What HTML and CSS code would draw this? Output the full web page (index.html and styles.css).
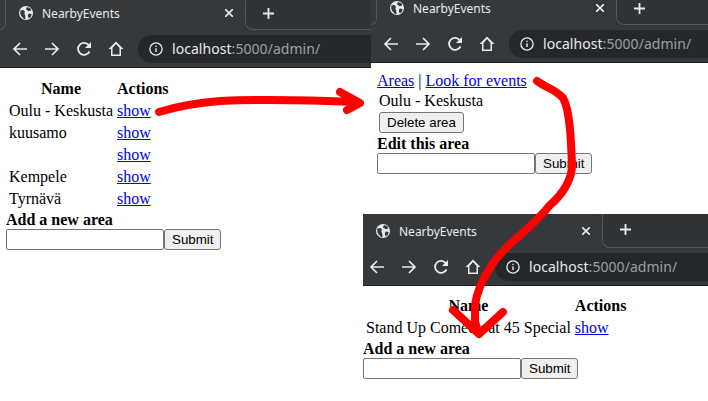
FILE: index.html
```html
<!DOCTYPE html>
<html lang="en">
<head>
  <meta charset="UTF-8" />
  <title>NearbyEvents</title>
  <link rel="stylesheet" href="styles.css">
</head>
<body>

  <!-- first shot: area list -->
  <div class="shot shot-list">
    <div class="tabstrip">
      <div class="strip-left"></div>
      <div class="tab">
        <svg class="globe" viewBox="0 0 16 16"><circle cx="8" cy="8" r="8" fill="#e8eaed"/><path d="M1.500 5L5 4.500 7 6.500 6 8 7 10.500 7.500 14.500 6 15 3 12 1.500 9zM9 1l4 1.500 1 2.500-3 1-1-1-2-1zM11 8.500l3.500.5-1 3.500-2.500 1.500-1-3z" fill="#35393c"/></svg>
        <span class="tab-title">NearbyEvents</span>
        <svg class="tab-close" viewBox="0 0 8 8"><path d="M0 0L8 8M8 0L0 8" stroke="#e8eaed" stroke-width="1.600"/></svg>
      </div>
      <div class="strip-rest">
        <svg class="newtab" viewBox="0 0 12 12"><path d="M6 0v12M0 6h12" stroke="#e8eaed" stroke-width="2"/></svg>
      </div>
    </div>
    <div class="toolbar">
      <svg class="nav" viewBox="0 0 16 16"><path d="M15 8H2M8 2L2 8l6 6" fill="none" stroke="#e8eaed" stroke-width="1.700"/></svg>
      <svg class="nav" viewBox="0 0 16 16"><path d="M1 8h13M8 2l6 6-6 6" fill="none" stroke="#e8eaed" stroke-width="1.700"/></svg>
      <svg class="nav" viewBox="0 0 16 16"><path d="M13.500 10.500A6 6 0 1 1 13 4.500" fill="none" stroke="#e8eaed" stroke-width="1.800"/><path d="M15 1v6H9z" fill="#e8eaed"/></svg>
      <svg class="nav" viewBox="0 0 16 16"><path d="M8 .5L.5 8H3v7h10V8h2.500zM4.500 13.500V7L8 3l3.500 4v6.500z" fill="#e8eaed" fill-rule="evenodd"/></svg>
      <div class="omnibox">
        <svg class="info" viewBox="0 0 16 16"><circle cx="8" cy="8" r="7" fill="none" stroke="#e8eaed" stroke-width="1.500"/><path d="M7.200 7h1.600v4.500H7.200zM7.200 4.200h1.600v1.600H7.200z" fill="#e8eaed"/></svg>
        <span class="host">localhost</span><span class="path">:5000/admin/</span>
      </div>
    </div>
    <div class="page">
      <table>
        <tr><th>Name</th><th>Actions</th></tr>
        <tr><td>Oulu - Keskusta</td><td><a href="#">show</a></td></tr>
        <tr><td>kuusamo</td><td><a href="#">show</a></td></tr>
        <tr><td></td><td><a href="#">show</a></td></tr>
        <tr><td>Kempele</td><td><a href="#">show</a></td></tr>
        <tr><td>Tyrnävä</td><td><a href="#">show</a></td></tr>
      </table>
      <div class="label">Add a new area</div>
      <form class="area-form"><input type="text"><button type="button">Submit</button></form>
    </div>
  </div>

  <!-- second shot: one area -->
  <div class="shot shot-area">
    <div class="tabstrip">
      <div class="strip-left"></div>
      <div class="tab">
        <svg class="globe" viewBox="0 0 16 16"><circle cx="8" cy="8" r="8" fill="#e8eaed"/><path d="M1.500 5L5 4.500 7 6.500 6 8 7 10.500 7.500 14.500 6 15 3 12 1.500 9zM9 1l4 1.500 1 2.500-3 1-1-1-2-1zM11 8.500l3.500.5-1 3.500-2.500 1.500-1-3z" fill="#35393c"/></svg>
        <span class="tab-title">NearbyEvents</span>
        <svg class="tab-close" viewBox="0 0 8 8"><path d="M0 0L8 8M8 0L0 8" stroke="#e8eaed" stroke-width="1.600"/></svg>
      </div>
      <div class="strip-rest">
        <svg class="newtab" viewBox="0 0 12 12"><path d="M6 0v12M0 6h12" stroke="#e8eaed" stroke-width="2"/></svg>
      </div>
    </div>
    <div class="toolbar">
      <svg class="nav" viewBox="0 0 16 16"><path d="M15 8H2M8 2L2 8l6 6" fill="none" stroke="#e8eaed" stroke-width="1.700"/></svg>
      <svg class="nav" viewBox="0 0 16 16"><path d="M1 8h13M8 2l6 6-6 6" fill="none" stroke="#e8eaed" stroke-width="1.700"/></svg>
      <svg class="nav" viewBox="0 0 16 16"><path d="M13.500 10.500A6 6 0 1 1 13 4.500" fill="none" stroke="#e8eaed" stroke-width="1.800"/><path d="M15 1v6H9z" fill="#e8eaed"/></svg>
      <svg class="nav" viewBox="0 0 16 16"><path d="M8 .5L.5 8H3v7h10V8h2.500zM4.500 13.500V7L8 3l3.500 4v6.500z" fill="#e8eaed" fill-rule="evenodd"/></svg>
      <div class="omnibox">
        <svg class="info" viewBox="0 0 16 16"><circle cx="8" cy="8" r="7" fill="none" stroke="#e8eaed" stroke-width="1.500"/><path d="M7.200 7h1.600v4.500H7.200zM7.200 4.200h1.600v1.600H7.200z" fill="#e8eaed"/></svg>
        <span class="host">localhost</span><span class="path">:5000/admin/</span>
      </div>
    </div>
    <div class="page">
      <div class="links"><a href="#">Areas</a> | <a href="#">Look for events</a></div>
      <div class="area-name">Oulu - Keskusta</div>
      <button type="button" class="delete">Delete area</button>
      <div class="label">Edit this area</div>
      <form class="area-form"><input type="text"><button type="button">Submit</button></form>
    </div>
  </div>

  <!-- third shot: events list -->
  <div class="shot shot-events">
    <div class="tabstrip">
      <div class="tab">
        <svg class="globe" viewBox="0 0 16 16"><circle cx="8" cy="8" r="8" fill="#e8eaed"/><path d="M1.500 5L5 4.500 7 6.500 6 8 7 10.500 7.500 14.500 6 15 3 12 1.500 9zM9 1l4 1.500 1 2.500-3 1-1-1-2-1zM11 8.500l3.500.5-1 3.500-2.500 1.500-1-3z" fill="#35393c"/></svg>
        <span class="tab-title">NearbyEvents</span>
        <svg class="tab-close" viewBox="0 0 8 8"><path d="M0 0L8 8M8 0L0 8" stroke="#e8eaed" stroke-width="1.600"/></svg>
      </div>
      <div class="strip-rest">
        <svg class="newtab" viewBox="0 0 12 12"><path d="M6 0v12M0 6h12" stroke="#e8eaed" stroke-width="2"/></svg>
      </div>
    </div>
    <div class="toolbar">
      <svg class="nav" viewBox="0 0 16 16"><path d="M15 8H2M8 2L2 8l6 6" fill="none" stroke="#e8eaed" stroke-width="1.700"/></svg>
      <svg class="nav" viewBox="0 0 16 16"><path d="M1 8h13M8 2l6 6-6 6" fill="none" stroke="#e8eaed" stroke-width="1.700"/></svg>
      <svg class="nav" viewBox="0 0 16 16"><path d="M13.500 10.500A6 6 0 1 1 13 4.500" fill="none" stroke="#e8eaed" stroke-width="1.800"/><path d="M15 1v6H9z" fill="#e8eaed"/></svg>
      <svg class="nav" viewBox="0 0 16 16"><path d="M8 .5L.5 8H3v7h10V8h2.500zM4.500 13.500V7L8 3l3.500 4v6.500z" fill="#e8eaed" fill-rule="evenodd"/></svg>
      <div class="omnibox">
        <svg class="info" viewBox="0 0 16 16"><circle cx="8" cy="8" r="7" fill="none" stroke="#e8eaed" stroke-width="1.500"/><path d="M7.200 7h1.600v4.500H7.200zM7.200 4.200h1.600v1.600H7.200z" fill="#e8eaed"/></svg>
        <span class="host">localhost</span><span class="path">:5000/admin/</span>
      </div>
    </div>
    <div class="page">
      <table>
        <tr><th>Name</th><th>Actions</th></tr>
        <tr><td>Stand Up Comedy at 45 Special</td><td><a href="#">show</a></td></tr>
      </table>
      <div class="label">Add a new area</div>
      <form class="area-form"><input type="text"><button type="button">Submit</button></form>
    </div>
  </div>

  <!-- hand drawn arrows on top -->
  <svg class="scribble" viewBox="0 0 708 401">
    <path d="M159 112C175 107 195 103 220 101C260 99 310 100 358 102M340 92L360 103L347 110" />
    <path d="M537 81C547 88 556 90 563 98C570 110 571 140 572 165C572 180 562 195 550 205C540 218 528 228 517 238C505 248 496 258 490 268C482 280 477 292 475 305L475 322L479 334M453 310L479 334L503 312" />
  </svg>

</body>
</html>
```

FILE: styles.css
```css
body {
  margin: 0;
  width: 708px;
  height: 401px;
  position: relative;
  overflow: hidden;
  background: #fff;
}
.shot {
  position: absolute;
  overflow: hidden;
  background: #fff;
}
.shot-list {
  left: 0;
  top: 0;
  width: 371px;
  height: 260px;
}
.shot-area {
  left: 371px;
  top: -5px;
  width: 337px;
  height: 185px;
}
.shot-events {
  left: 363px;
  top: 214px;
  width: 345px;
  height: 170px;
}
.tabstrip {
  height: 30px;
  background: #303437;
  display: flex;
  align-items: flex-end;
}
.shot-events .tabstrip {
  height: 34px;
}
.strip-left {
  width: 6px;
  height: 100%;
  box-sizing: border-box;
  border-right: 1px solid #55595d;
  border-bottom: 1px solid #55595d;
  border-radius: 0 0 8px 0;
  background: #35393c;
  flex: none;
}
.tab {
  height: 34px;
  width: 239px;
  flex: none;
  padding: 0 13px;
  box-sizing: border-box;
  background: #35393c;
  border-radius: 8px 8px 0 0;
  display: flex;
  align-items: center;
  color: #e8eaed;
  font-family: "Noto Sans", sans-serif;
  font-size: 12px;
}
.globe {
  width: 14px;
  height: 14px;
  margin-right: 9px;
}
.tab-title {
  flex: 1;
}
.tab-close {
  width: 8px;
  height: 8px;
  margin-right: -1px;
}
.strip-rest {
  flex: 1;
  height: 100%;
  box-sizing: border-box;
  padding: 0 0 0 17px;
  border-left: 1px solid #55595d;
  border-bottom: 1px solid #55595d;
  border-radius: 0 0 0 8px;
  display: flex;
  align-items: center;
}
.newtab {
  width: 11px;
  height: 11px;
  margin-bottom: 2px;
}
.toolbar {
  height: 38px;
  box-sizing: border-box;
  background: #35393c;
  border-bottom: 1px solid #1c1d1f;
  display: flex;
  align-items: center;
  padding-left: 12px;
  gap: 16px;
}
.shot-events .toolbar {
  padding-left: 6px;
}
.nav {
  width: 16px;
  height: 16px;
}
.omnibox {
  flex: 1;
  height: 28px;
  margin-left: -2px;
  padding-left: 11px;
  background: #25282b;
  border-radius: 14px 0 0 14px;
  display: flex;
  align-items: center;
  font-family: "Noto Sans", sans-serif;
  font-size: 14px;
  letter-spacing: 0.05px;
}
.info {
  width: 14px;
  height: 14px;
  margin-right: 9px;
}
.host {
  color: #e8eaed;
}
.path {
  color: #9aa0a6;
}
.page {
  padding: 9px 6px 0;
  font-family: "Liberation Serif", serif;
  font-size: 16px;
  color: #000;
}
.shot-events .page {
  padding: 8px 0 0;
}
.page a {
  color: #0000ee;
}
.label {
  font-weight: bold;
}
.shot-area .label {
  margin-top: 2px;
}
.area-form {
  display: flex;
  align-items: flex-start;
  margin: 0;
}
input {
  width: 158px;
  height: 21px;
  box-sizing: border-box;
  border: 1px solid #767676;
  border-radius: 2px;
  padding: 1px 2px;
}
button {
  font-family: "Liberation Sans", sans-serif;
  font-size: 13.333px;
  height: 21px;
  padding: 1px 7px;
  border: 1px solid #767676;
  border-radius: 3px;
  background: #efefef;
  color: #000;
}
.area-name {
  margin: 2px 0 0 2px;
}
.delete {
  display: block;
  margin: 2px 0 0 2px;
}
.scribble {
  position: absolute;
  left: 0;
  top: 0;
  width: 708px;
  height: 401px;
  fill: none;
  stroke: #ff0000;
  stroke-width: 8;
  stroke-linecap: round;
  stroke-linejoin: round;
}
```
